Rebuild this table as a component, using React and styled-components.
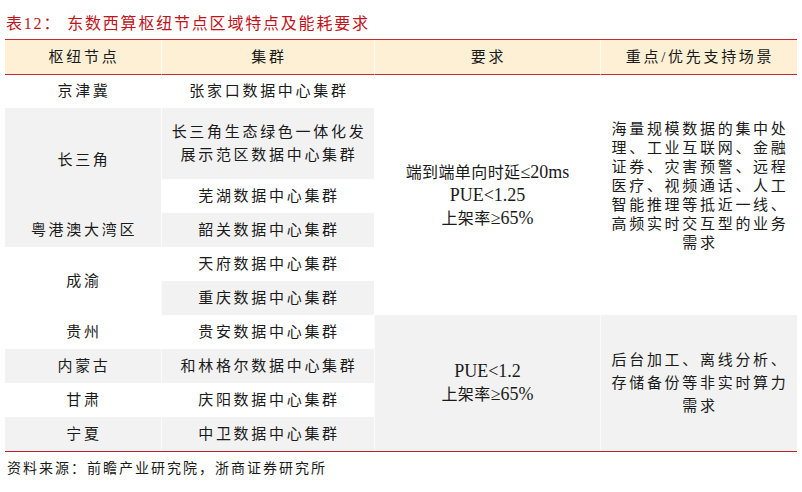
import React from "react"
import styled, { createGlobalStyle } from "styled-components"

const RED = "#c8282f"
const GREY = "#f2f2f2"
const CREAM = "#fdf0d5"

const GlobalStyle = createGlobalStyle`
    html, body {
        margin: 0;
        padding: 0;
        background: #fff;
    }
    body {
        font-family: "Liberation Serif", "Noto Sans CJK SC", serif;
        color: #1a1a1a;
    }
`

const hubs = [
    { name: "京津冀", row: 2 },
    { name: "长三角", row: 3, span: 2, grey: true },
    { name: "粤港澳大湾区", row: 5, grey: true },
    { name: "成渝", row: 6, span: 2 },
    { name: "贵州", row: 8 },
    { name: "内蒙古", row: 9, grey: true },
    { name: "甘肃", row: 10 },
    { name: "宁夏", row: 11, grey: true },
]

const clusters = [
    { lines: ["张家口数据中心集群"], row: 2 },
    { lines: ["长三角生态绿色一体化发", "展示范区数据中心集群"], row: 3, grey: true },
    { lines: ["芜湖数据中心集群"], row: 4 },
    { lines: ["韶关数据中心集群"], row: 5, grey: true },
    { lines: ["天府数据中心集群"], row: 6 },
    { lines: ["重庆数据中心集群"], row: 7, grey: true },
    { lines: ["贵安数据中心集群"], row: 8 },
    { lines: ["和林格尔数据中心集群"], row: 9, grey: true },
    { lines: ["庆阳数据中心集群"], row: 10 },
    { lines: ["中卫数据中心集群"], row: 11, grey: true },
]

const groups = [
    {
        row: 2,
        span: 6,
        grey: false,
        req: [
            ["端到端单向时延", "≤20ms"],
            ["", "PUE<1.25"],
            ["上架率", "≥65%"],
        ],
        scene: [
            "海量规模数据的集中处",
            "理、工业互联网、金融",
            "证券、灾害预警、远程",
            "医疗、视频通话、人工",
            "智能推理等抵近一线、",
            "高频实时交互型的业务",
            "需求",
        ],
        lh: 19,
        lift: 17,
    },
    {
        row: 8,
        span: 4,
        grey: true,
        req: [
            ["", "PUE<1.2"],
            ["上架率", "≥65%"],
        ],
        scene: ["后台加工、离线分析、", "存储备份等非实时算力", "需求"],
        lh: 23,
        lift: 0,
    },
]

const App = () => {
    return (
        <Page>
            <GlobalStyle />
            <Title>
                <TitleLabel>表12：</TitleLabel>
                东数西算枢纽节点区域特点及能耗要求
            </Title>
            <Table>
                <HeadCell $col={1} $row={1}>枢纽节点</HeadCell>
                <HeadCell $col={2} $row={1}>集群</HeadCell>
                <HeadCell $col={3} $row={1}>要求</HeadCell>
                <HeadCell $col={4} $row={1}>重点/优先支持场景</HeadCell>

                {hubs.map((h) => (
                    <Cell key={h.name} $col={1} $row={h.row} $span={h.span} $grey={h.grey}>
                        {h.name}
                    </Cell>
                ))}

                {clusters.map((c) => (
                    <Cell key={c.row} $col={2} $row={c.row} $grey={c.grey}>
                        <div>
                            {c.lines.map((l) => (
                                <Line key={l}>{l}</Line>
                            ))}
                        </div>
                    </Cell>
                ))}

                {groups.map((g) => (
                    <React.Fragment key={g.row}>
                        <ReqCell $col={3} $row={g.row} $span={g.span} $grey={g.grey}>
                            <div>
                                {g.req.map(([cjk, latin]) => (
                                    <Line key={cjk + latin}>
                                        {cjk}
                                        <Latin>{latin}</Latin>
                                    </Line>
                                ))}
                            </div>
                        </ReqCell>
                        <Cell
                            $col={4}
                            $row={g.row}
                            $span={g.span}
                            $grey={g.grey}
                            $lh={g.lh}
                            $lift={g.lift}
                        >
                            <div>
                                {g.scene.map((l) => (
                                    <Line key={l}>{l}</Line>
                                ))}
                            </div>
                        </Cell>
                    </React.Fragment>
                ))}
            </Table>
            <Source>资料来源：前瞻产业研究院，浙商证券研究所</Source>
        </Page>
    )
}

const Page = styled.div`
    width: 792px;
    padding: 0 5px;
`

const Title = styled.div`
    height: 39px;
    box-sizing: border-box;
    padding: 4px 0 0 1px;
    display: flex;
    align-items: center;
    font-size: 16px;
    letter-spacing: 1.8px;
    color: #c0141c;
`

const TitleLabel = styled.span`
    margin-right: 6px;
`

const Table = styled.div`
    display: grid;
    grid-template-columns: 156px 213px 226px 197px;
    grid-template-rows: 35px 33px 71px repeat(8, 34px);
    border-top: 1px solid ${RED};
    border-bottom: 1px solid #b8232a;
`

const Cell = styled.div`
    grid-column: ${(p) => p.$col};
    grid-row: ${(p) => p.$row} / span ${(p) => p.$span || 1};
    box-sizing: border-box;
    display: flex;
    align-items: center;
    justify-content: center;
    text-align: center;
    padding: 0 0 ${(p) => p.$lift || 0}px 2px;
    background: ${(p) => (p.$grey ? GREY : "#fff")};
    border-left: ${(p) => (p.$col > 1 ? "1px solid rgba(255, 255, 255, 0.7)" : "none")};
    font-size: 15px;
    letter-spacing: 2.7px;
    line-height: ${(p) => p.$lh || 23}px;
`

const HeadCell = styled(Cell)`
    background: ${CREAM};
    border-bottom: 1px solid ${RED};
`

const ReqCell = styled(Cell)`
    font-size: 16px;
    letter-spacing: 0.4px;
    padding-left: 0;
`

const Line = styled.span`
    display: block;
    white-space: nowrap;
`

const Latin = styled.span`
    font-size: 18px;
    letter-spacing: 0;
`

const Source = styled.div`
    margin-top: 7px;
    padding-left: 2px;
    font-size: 14px;
    line-height: 20px;
    letter-spacing: 2px;
    color: #1a1a1a;
`

export default App
